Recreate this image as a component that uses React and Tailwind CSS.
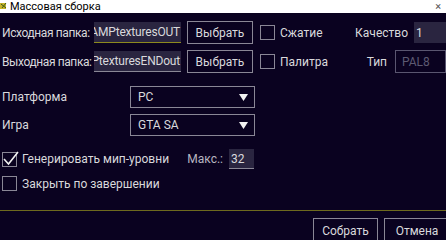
import React from "react";

const font = { fontFamily: 'Roboto, "Noto Sans", sans-serif' };

function Box({ checked }) {
  return (
    <div className="relative w-[15px] h-[15px] border border-[#8a8796] shrink-0">
      {checked && (
        <svg className="absolute -top-[3px] -left-[1px]" width="17" height="17" viewBox="0 0 17 17">
          <path d="M2 9 L6.5 14 L16 2" fill="none" stroke="#f2f2f2" strokeWidth="1.6" />
        </svg>
      )}
    </div>
  );
}

function Select({ value }) {
  return (
    <div className="w-[125px] h-[22px] border border-[#8a8796] flex items-center justify-between pl-[7px] pr-[6px]">
      <span>{value}</span>
      <svg width="9" height="7" viewBox="0 0 9 7">
        <path d="M0 0 H9 L4.5 7 Z" fill="#f2f2f2" />
      </svg>
    </div>
  );
}

export default function App() {
  return (
    <div className="w-[446px] h-[240px] overflow-hidden bg-[#0a0220] text-[12px] text-[#d9d9dc] leading-none whitespace-nowrap" style={font}>
      <div className="h-[13px] bg-white flex items-center relative">
        <svg className="absolute left-0 top-[2px]" width="8" height="8" viewBox="0 0 8 8">
          <rect x="0" y="1" width="6" height="6" fill="#c9b52a" />
          <path d="M1 2 L6 6 M6 1 L2 6" stroke="#3c5a18" strokeWidth="1" />
        </svg>
        <span className="ml-[10px] text-[11px] text-black">Массовая сборка</span>
        <span className="ml-auto mr-[5px] text-[11px] text-[#555]">×</span>
      </div>

      <div className="h-[197px] flex flex-col pt-[8px]">
        <div className="flex items-center h-[23px]">
          <span className="w-[94px] pl-[2px] shrink-0 tracking-[-0.4px]">Исходная папка:</span>
          <div className="w-[87px] h-[21px] bg-[#2a2540] border-b border-[#8d8a1e] overflow-hidden flex items-center justify-end pr-[1px] tracking-[-0.2px]">
            AMPtexturesOUT
          </div>
          <div className="ml-[6px] w-[66px] h-[23px] border border-[#8a8796] flex items-center justify-center">Выбрать</div>
          <div className="ml-[7px] flex items-center">
            <Box />
            <span className="ml-[5px]">Сжатие</span>
          </div>
          <div className="ml-auto flex items-center">
            <span>Качество</span>
            <div className="ml-[6px] w-[32px] h-[21px] bg-[#2a2540] flex items-center pl-[2px]">1</div>
          </div>
        </div>

        <div className="flex items-center h-[23px] mt-[6px]">
          <span className="w-[94px] pl-[2px] shrink-0 tracking-[-0.4px]">Выходная папка:</span>
          <div className="w-[87px] h-[21px] bg-[#2a2540] border-b border-[#8a8796] overflow-hidden flex items-center justify-end pr-[1px] tracking-[-0.2px]">
            PtexturesENDout
          </div>
          <div className="ml-[6px] w-[66px] h-[23px] border border-[#8a8796] flex items-center justify-center">Выбрать</div>
          <div className="ml-[7px] flex items-center">
            <Box />
            <span className="ml-[5px]">Палитра</span>
          </div>
          <div className="ml-auto flex items-center">
            <span>Тип</span>
            <div className="ml-[8px] w-[51px] h-[23px] border border-[#5a5670] flex items-center pl-[6px] text-[#5d5a72]">PAL8</div>
          </div>
        </div>

        <div className="flex items-center mt-[13px]">
          <span className="w-[130px] pl-[2px]">Платформа</span>
          <Select value="PC" />
        </div>
        <div className="flex items-center mt-[6px]">
          <span className="w-[130px] pl-[2px]">Игра</span>
          <Select value="GTA SA" />
        </div>

        <div className="flex items-center mt-[13px] h-[20px]">
          <div className="ml-[2px] flex items-center">
            <Box checked />
            <span className="ml-[5px]">Генерировать мип-уровни</span>
          </div>
          <span className="ml-auto text-[#b8b6c0]">Макс.:</span>
          <div className="ml-[6px] mr-[192px] w-[25px] h-[20px] bg-[#2a2540] border-b border-[#8a8796] flex items-center pl-[2px]">32</div>
        </div>
        <div className="flex items-center mt-[7px] ml-[2px]">
          <Box />
          <span className="ml-[5px]">Закрыть по завершении</span>
        </div>
      </div>

      <div className="border-t border-[#6e6a1e] h-[30px] flex justify-end pt-[7px] pr-0 overflow-hidden">
        <div className="w-[65px] h-[26px] border border-[#8a8796] flex items-center justify-center">Собрать</div>
        <div className="ml-[6px] w-[66px] h-[26px] border border-[#8a8796] flex items-center justify-center shrink-0 mr-[-4px]">Отмена</div>
      </div>
    </div>
  );
}
